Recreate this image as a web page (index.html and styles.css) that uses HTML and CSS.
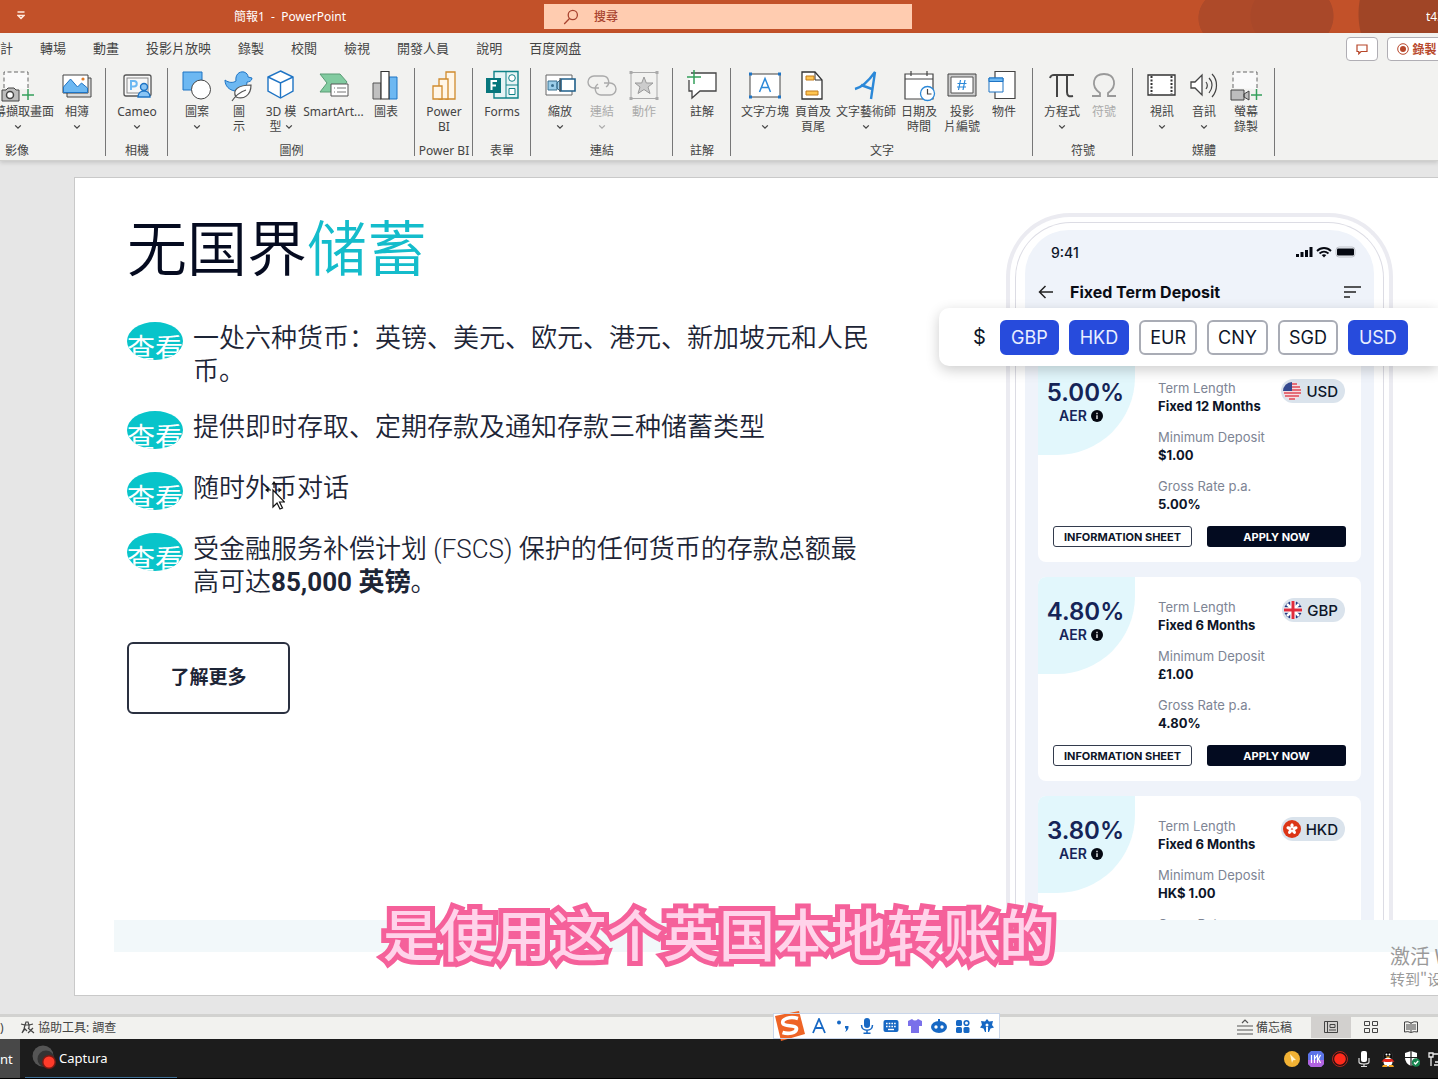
FILE: index.html
```html
<!DOCTYPE html>
<html lang="zh-Hant">
<head>
<meta charset="utf-8">
<meta name="viewport" content="width=device-width, initial-scale=1">
<title>簡報1 - PowerPoint</title>
<link rel="stylesheet" href="styles.css">
</head>
<body>
<svg class="sprite" aria-hidden="true">
  <symbol id="chev" viewBox="0 0 8 6"><path d="M1.2 1.4 4 4.2 6.800 1.400" fill="none" stroke="currentColor" stroke-width="1.300"/></symbol>
  <symbol id="info" viewBox="0 0 12 12"><circle cx="6" cy="6" r="6" fill="#050811"/><path d="M6 5.200V9M6 2.800v1.400" stroke="#fff" stroke-width="1.300"/></symbol>
</svg>
<div class="app">
  <header class="titlebar">
    <div class="title-left">
      <svg class="qat" viewBox="0 0 8 9" width="8" height="9"><path d="M.5 1h7M1 4.500l3 3 3-3z" fill="none" stroke="#ffe9dd" stroke-width="1.400"/></svg>
      <span class="doc-title">簡報1&nbsp; -&nbsp; PowerPoint</span>
    </div>
    <label class="search">
      <svg viewBox="0 0 16 16" width="16" height="16"><circle cx="9.800" cy="6" r="4.600" fill="none" stroke="#a8432f" stroke-width="1.300"/><path d="M6.500 9.500 1.200 15" stroke="#a8432f" stroke-width="1.300"/></svg>
      <input type="text" placeholder="搜尋" aria-label="搜尋">
    </label>
    <div class="title-right"><span class="user">t43</span></div>
  </header>

  <div class="ribbon">
    <div class="tabrow">
      <nav class="tabs">
        <a href="#">計</a><a href="#">轉場</a><a href="#">動畫</a><a href="#">投影片放映</a><a href="#">錄製</a><a href="#">校閱</a><a href="#">檢視</a><a href="#">開發人員</a><a href="#">說明</a><a href="#">百度网盘</a>
      </nav>
      <div class="tab-actions">
        <button class="tab-btn" aria-label="註解"><svg viewBox="0 0 12 11" width="12" height="11"><path d="M1 1h10v6.500H5L2.800 9.800V7.500H1z" fill="none" stroke="#b7472a" stroke-width="1.200"/></svg></button>
        <button class="tab-btn record"><svg viewBox="0 0 12 12" width="12" height="12"><circle cx="6" cy="6" r="5.300" fill="none" stroke="#b7472a"/><circle cx="6" cy="6" r="3" fill="#b7472a"/></svg>錄製</button>
      </div>
    </div>
    <div class="groups">
      <section class="group first">
        <div class="items">
          <button class="item w76"><svg viewBox="0 0 32 30"><path d="M2 18V2h24v17" fill="#fafafa" stroke="#666" stroke-dasharray="4 2.500"/><path d="M0 20h4l2-2h6l2 2h3v11H0z" fill="#bdbdbd" stroke="#444"/><circle cx="8" cy="25" r="3.500" fill="#fff" stroke="#444" stroke-width="1.500"/><path d="M20 25h12M26 19v11" stroke="#35a05b" stroke-width="1.500"/></svg><span>螢幕擷取畫面</span><svg class="chev"><use href="#chev"/></svg></button>
          <button class="item w42"><svg viewBox="0 0 32 30"><path d="M6 8h24v19H6z" fill="#ddd" stroke="#444"/><path d="M2 5h25v18H2z" fill="#fff" stroke="#444"/><path d="M2.500 17l7-8 7 8 4-4 6 5v4.500h-24z" fill="#6db8f2" stroke="#1f74c4"/><circle cx="22" cy="9" r="1.600" fill="#e07b28"/></svg><span>相簿</span><svg class="chev"><use href="#chev"/></svg></button>
        </div>
        <h2>影像</h2>
      </section>
      <section class="group">
        <div class="items">
          <button class="item w46"><svg viewBox="0 0 32 30"><rect x="3" y="5" width="27" height="21" rx="2" fill="#f8f8f8" stroke="#555" stroke-width="1.300"/><rect x="6" y="8" width="21" height="15" fill="none" stroke="#888"/><path d="M10 20v-9h3a2.500 2.500 0 0 1 0 5.500h-3" fill="none" stroke="#6db8f2" stroke-width="2"/><circle cx="23" cy="17" r="3.500" fill="#8ac5f5" stroke="#1f74c4" stroke-width="1.400"/><path d="M17 27c0-8 12-8 12 0z" fill="#8ac5f5" stroke="#1f74c4" stroke-width="1.400"/></svg><span>Cameo</span><svg class="chev"><use href="#chev"/></svg></button>
        </div>
        <h2>相機</h2>
      </section>
      <section class="group">
        <div class="items">
          <button class="item w42"><svg viewBox="0 0 32 30"><path d="M2 2h19v18H2z" fill="#6db8f2" stroke="#1f74c4"/><circle cx="20" cy="19.500" r="9.500" fill="#fff" stroke="#444"/></svg><span>圖案</span><svg class="chev"><use href="#chev"/></svg></button>
          <button class="item w42"><svg viewBox="0 0 32 30"><path d="M2 10c4 3 8 3 11 1-1-6 3-10 8-9 3 1 4 3 4 5l4 1c0 3-3 4-5 4 0 6-5 10-12 9C6 20 2 16 2 10z" fill="#6db8f2" stroke="#1f74c4"/><path d="M13 27c-4-7 2-12 15-12 0 10-7 15-15 12z" fill="#fff" stroke="#555" stroke-width="1.200"/><path d="M9 31c4-6 8-9 14-11" fill="none" stroke="#555" stroke-width="1.200"/></svg><span>圖<br>示</span></button>
          <button class="item w42"><svg viewBox="0 0 32 30"><path d="M15.500 1 28 7v14L15.500 28 3 21V7z" fill="#fff" stroke="#1f74c4" stroke-width="1.400"/><path d="M3 7l12.500 6L28 7M15.500 13v15" fill="none" stroke="#1f74c4" stroke-width="1.400"/></svg><span>3D 模<br>型 <svg class="chev inline"><use href="#chev"/></svg></span></button>
          <button class="item w63"><svg viewBox="0 0 32 30"><path d="M2 4h20l7 8-7 10H2l7-9z" fill="#82cba0" stroke="#5a9c75"/><path d="M13 14h17v12H13z" fill="#fff" stroke="#555"/><path d="M16 18h1m2 0h9M16 22h1m2 0h9" stroke="#777" stroke-width="1.200"/></svg><span>SmartArt...</span></button>
          <button class="item w42"><svg viewBox="0 0 32 30"><path d="M3 13h8v16H3z" fill="#c0c0c0" stroke="#555"/><path d="M19 7h8v22h-8z" fill="#6db8f2" stroke="#1f74c4"/><path d="M11 1.500h8V29h-8z" fill="#fff" stroke="#333" stroke-width="1.200"/></svg><span>圖表</span></button>
        </div>
        <h2>圖例</h2>
      </section>
      <section class="group">
        <div class="items">
          <button class="item w42"><svg viewBox="0 0 32 30"><g fill="#fff6e8" stroke="#d08a2c" stroke-width="1.300"><path d="M18 2h9v27h-9z"/><path d="M11 9h9v20h-9z"/><path d="M5 16h9v13H5z"/></g></svg><span>Power<br>BI</span></button>
        </div>
        <h2>Power BI</h2>
      </section>
      <section class="group">
        <div class="items">
          <button class="item w42"><svg viewBox="0 0 32 30"><path d="M8 1.500h24V28H8z" fill="#e6f4f5" stroke="#0f8288" stroke-width="1.400"/><path d="M20 1.500V28M20 15h12" stroke="#0f8288"/><circle cx="26" cy="8" r="3.300" fill="#fff" stroke="#0f8288"/><path d="M23 18.500h6v6h-6z" fill="#fff" stroke="#0f8288"/><path d="M0 8h15v15H0z" fill="#07767c"/><path d="M5.500 20v-9H11M5.500 15.500H10" stroke="#fff" stroke-width="2" fill="none"/></svg><span>Forms</span></button>
        </div>
        <h2>表單</h2>
      </section>
      <section class="group">
        <div class="items">
          <button class="item w42"><svg viewBox="0 0 32 30"><path d="M2 5h26v20H2z" fill="#fff" stroke="#666"/><path d="M4 11h9v9H4zM13 13l3-3v11l-3-3z" fill="#9ccfea" stroke="#39708f"/><circle cx="8.500" cy="15.500" r="1.500" fill="#39708f"/><path d="M17 9h14v12H17z" fill="#fff" stroke="#1f5f8a" stroke-width="1.600"/><path d="M16 8v14" stroke="#444"/></svg><span>縮放</span><svg class="chev"><use href="#chev"/></svg></button>
          <button class="item w42" disabled><svg viewBox="0 0 32 30"><g fill="none" stroke="#aaa" stroke-width="1.400"><path d="M13 18H8A6 6 0 0 1 8 6h9a6 6 0 0 1 3 11"/><path d="M18 13h6a6 6 0 0 1 0 12h-9a6 6 0 0 1-3-11"/></g></svg><span>連結</span><svg class="chev"><use href="#chev"/></svg></button>
          <button class="item w42" disabled><svg viewBox="0 0 32 30"><path d="M3 2.500h26v26H3z" fill="none" stroke="#aaa"/><path d="M1.500 1h3v3h-3zM27.500 1h3v3h-3zM1.500 27h3v3h-3zM27.500 27h3v3h-3z" fill="#aaa"/><path d="M16 7l2.300 6H25l-5 4 2 6.500-6-4-6 4 2-6.500-5-4h6.700z" fill="#ccc" stroke="#999"/></svg><span>動作</span></button>
        </div>
        <h2>連結</h2>
      </section>
      <section class="group">
        <div class="items">
          <button class="item w42"><svg viewBox="0 0 32 30"><path d="M5 3h25v18H14l-8 7v-7H3V10" fill="#fff" stroke="#444" stroke-width="1.300"/><path d="M8 0v14M1 7h14" stroke="#35a05b" stroke-width="1.500"/></svg><span>註解</span></button>
        </div>
        <h2>註解</h2>
      </section>
      <section class="group">
        <div class="items">
          <button class="item w52"><svg viewBox="0 0 32 30"><path d="M1 4h30v23H1z" fill="#fff" stroke="#444"/><path d="M0 2.500h3v3H0zM29 2.500h3v3h-3zM0 25.500h3v3H0zM29 25.500h3v3h-3z" fill="#1f74c4"/><path d="M10.500 22 16 8.500 21.500 22M12.500 17.500h7" fill="none" stroke="#2b88d8" stroke-width="1.500"/></svg><span>文字方塊</span><svg class="chev"><use href="#chev"/></svg></button>
          <button class="item w44"><svg viewBox="0 0 32 30"><path d="M5 2h13l7 8v19H5z" fill="#fff" stroke="#333" stroke-width="1.300"/><path d="M18 2v8h7" fill="none" stroke="#333"/><path d="M9 6h8v4H9zM9 21h12v4H9z" fill="#ffc550" stroke="#c27a1a"/></svg><span>頁首及<br>頁尾</span></button>
          <button class="item w62"><svg viewBox="0 0 32 30"><path d="M5 19C13 17 20 9 25 2L21 29M11 15l11 4" fill="none" stroke="#2b88d8" stroke-width="2.400"/></svg><span>文字藝術師</span><svg class="chev"><use href="#chev"/></svg></button>
          <button class="item w44"><svg viewBox="0 0 32 30"><path d="M2 4h28v25H2zM2 9h28M8 1v5M24 1v5" fill="#fff" stroke="#444" stroke-width="1.200"/><circle cx="24.500" cy="23.500" r="7" fill="#fff" stroke="#2b88d8" stroke-width="1.300"/><path d="M24.500 19v5h4" fill="none" stroke="#444" stroke-width="1.200"/></svg><span>日期及<br>時間</span></button>
          <button class="item w42"><svg viewBox="0 0 32 30"><path d="M2 4h28v22H2z" fill="#ccc" stroke="#444"/><path d="M5 7h22v16H5z" fill="#fff" stroke="#555"/><path d="M14.500 10l-2 10M19 10l-2 10M11.500 13.500h9M11 17h9" stroke="#2b88d8" stroke-width="1.200"/></svg><span>投影<br>片編號</span></button>
          <button class="item w42"><svg viewBox="0 0 32 30"><path d="M7 1.500h20v27H7z" fill="#fff" stroke="#444" stroke-width="1.200"/><path d="M1 8h14v14H1z" fill="#fff" stroke="#1f74c4"/><path d="M1 8h14v3.500H1z" fill="#6db8f2" stroke="#1f74c4"/></svg><span>物件</span></button>
        </div>
        <h2>文字</h2>
      </section>
      <section class="group">
        <div class="items">
          <button class="item w42"><svg viewBox="0 0 32 30"><path d="M4 8c1-3 2-3 4-3h20M11 5v22M21 5v17c0 4 2 5 6 4" fill="none" stroke="#444" stroke-width="2"/></svg><span>方程式</span><svg class="chev"><use href="#chev"/></svg></button>
          <button class="item w42" disabled><svg viewBox="0 0 32 30"><path d="M4 26h8v-3c-10-7-7-19 4-19s14 12 4 19v3h8" fill="none" stroke="#999" stroke-width="1.800"/></svg><span>符號</span></button>
        </div>
        <h2>符號</h2>
      </section>
      <section class="group">
        <div class="items">
          <button class="item w42"><svg viewBox="0 0 32 30"><path d="M2 5h27v20H2z" fill="#fff" stroke="#333" stroke-width="1.300"/><path d="M5.500 6v18M25.500 6v18" stroke="#333" stroke-width="2" stroke-dasharray="2 1.500"/></svg><span>視訊</span><svg class="chev"><use href="#chev"/></svg></button>
          <button class="item w42"><svg viewBox="0 0 32 30"><path d="M3 12h4l7-7v20l-7-7H3z" fill="#fff" stroke="#444" stroke-width="1.300"/><path d="M18 12c1.500 2 1.500 5 0 7M21 8c4 4 4 10 0 15M24 4c6 6 6 16 0 23" fill="none" stroke="#444" stroke-width="1.200"/></svg><span>音訊</span><svg class="chev"><use href="#chev"/></svg></button>
          <button class="item w42"><svg viewBox="0 0 32 30"><path d="M3 18V2h24v17" fill="#fafafa" stroke="#666" stroke-dasharray="4 2.500"/><path d="M1 20h13v10H1zM14 24l5-3v9l-5-3z" fill="#bdbdbd" stroke="#444"/><path d="M21 25h11M26.500 19v11" stroke="#35a05b" stroke-width="1.500"/></svg><span>螢幕<br>錄製</span></button>
        </div>
        <h2>媒體</h2>
      </section>
    </div>
  </div>

  <main class="workspace" lang="zh-Hans">
    <article class="slide">
      <div class="slide-main">
        <div class="copy">
          <h1>无国界<em>储蓄</em></h1>
          <ul class="points">
            <li><span class="badge">查看</span><p>一处六种货币：英镑、美元、欧元、港元、新加坡元和人民币。</p></li>
            <li><span class="badge">查看</span><p>提供即时存取、定期存款及通知存款三种储蓄类型</p></li>
            <li><span class="badge">查看</span><p>随时外币对话</p></li>
            <li><span class="badge">查看</span><p>受金融服务补偿计划 (FSCS) 保护的任何货币的存款总额最高可达<b>85,000 英镑</b>。</p></li>
          </ul>
          <button class="more">了解更多</button>
          <svg class="cursor" viewBox="0 0 20 29" width="20" height="29"><path d="M8 9v17l4-4 3 6 2.500-1-3-6h5z" fill="#fff" stroke="#111" stroke-width="1.200"/><path d="M9 0l2.500 3.500h-5zM0 9l3.500-2.500v5zM17 9l-3.500-2.500v5z" fill="#111"/><path d="M9 2v5M3 9h3M11 9h4" stroke="#111" stroke-width="1.200"/></svg>
        </div>
        <div class="device">
          <div class="phone"><div class="bezel"><div class="screen">
            <div class="phone-status"><span>9:41</span>
              <svg viewBox="0 0 62 12" width="62" height="12"><path d="M1 8h3v3H1zM5.500 6h3v5h-3zM10 4h3v7h-3zM14.500 1h3v10h-3z" fill="#050811"/><path d="M22 5c4-4 10-4 14 0M24.500 7.500c3-2.500 6-2.500 9 0" fill="none" stroke="#050811" stroke-width="1.800"/><path d="M29 11.500l-2.300-2.500q2.300-1.500 4.600 0z" fill="#050811"/><rect x="41" y="1" width="19" height="10" rx="3" fill="none" stroke="#c0c3ca"/><rect x="42" y="2.500" width="17" height="7" rx="1" fill="#050811"/></svg>
            </div>
            <div class="phone-nav">
              <svg viewBox="0 0 15 14" width="15" height="14"><path d="M7.500 1 1.500 7l6 6M1.500 7H15" fill="none" stroke="#222" stroke-width="1.500"/></svg>
              <strong>Fixed Term Deposit</strong>
              <svg viewBox="0 0 17 14" width="17" height="14"><path d="M0 2h17M0 7h12M0 12h6" stroke="#222" stroke-width="1.600"/></svg>
            </div>
            <div class="cards">
              <section class="card">
                <div class="rate"><b>5.00%</b><span>AER <svg width="12" height="12"><use href="#info"/></svg></span></div>
                <dl><dt>Term Length</dt><dd>Fixed 12 Months</dd><dt>Minimum Deposit</dt><dd>$1.00</dd><dt>Gross Rate p.a.</dt><dd>5.00%</dd></dl>
                <span class="pill"><svg viewBox="0 0 18 18" width="18" height="18"><circle cx="9" cy="9" r="9" fill="#f6dfe2"/><path d="M9 2h5M9 5h8M9 8h9M1 11h17M2 14h14M6 17h6" stroke="#e04a55" stroke-width="1.500"/><path d="M9 0v9H0A9 9 0 0 1 9 0z" fill="#34498f"/></svg>USD</span>
                <div class="actions"><button class="sheet">INFORMATION SHEET</button><button class="apply">APPLY NOW</button></div>
              </section>
              <section class="card">
                <div class="rate"><b>4.80%</b><span>AER <svg width="12" height="12"><use href="#info"/></svg></span></div>
                <dl><dt>Term Length</dt><dd>Fixed 6 Months</dd><dt>Minimum Deposit</dt><dd>£1.00</dd><dt>Gross Rate p.a.</dt><dd>4.80%</dd></dl>
                <span class="pill"><svg viewBox="0 0 18 18" width="18" height="18"><circle cx="9" cy="9" r="9" fill="#20367e"/><path d="M3 3l12 12M15 3 3 15" stroke="#fff" stroke-width="2.500"/><path d="M9 0v18M0 9h18" stroke="#fff" stroke-width="5.500"/><path d="M9 0v18M0 9h18" stroke="#e02c3c" stroke-width="3"/></svg>GBP</span>
                <div class="actions"><button class="sheet">INFORMATION SHEET</button><button class="apply">APPLY NOW</button></div>
              </section>
              <section class="card">
                <div class="rate"><b>3.80%</b><span>AER <svg width="12" height="12"><use href="#info"/></svg></span></div>
                <dl><dt>Term Length</dt><dd>Fixed 6 Months</dd><dt>Minimum Deposit</dt><dd>HK$ 1.00</dd><dt>Gross Rate p.a.</dt><dd>3.80%</dd></dl>
                <span class="pill"><svg viewBox="0 0 18 18" width="18" height="18"><circle cx="9" cy="9" r="9" fill="#dc3516"/><g fill="#fff"><ellipse cx="9" cy="5.800" rx="1.700" ry="2.600"/><ellipse cx="9" cy="5.800" rx="1.700" ry="2.600" transform="rotate(72 9 9)"/><ellipse cx="9" cy="5.800" rx="1.700" ry="2.600" transform="rotate(144 9 9)"/><ellipse cx="9" cy="5.800" rx="1.700" ry="2.600" transform="rotate(216 9 9)"/><ellipse cx="9" cy="5.800" rx="1.700" ry="2.600" transform="rotate(288 9 9)"/></g></svg>HKD</span>
              </section>
            </div>
          </div></div></div>
          <div class="currencies">
            <span class="dollar">$</span>
            <button class="on">GBP</button><button class="on">HKD</button><button>EUR</button><button>CNY</button><button>SGD</button><button class="on">USD</button>
          </div>
        </div>
      </div>
      <div class="band"></div>
    </article>
    <p class="caption">是使用这个英国本地转账的</p>
    <div class="activate"><p>激活 Windows</p><small>转到"设置"以激活</small></div>
  </main>

  <footer class="statusbar">
    <span class="lang">)</span>
    <svg viewBox="0 0 15 14" width="15" height="14"><path d="M1 4l4 1 1-3 2 0 1 3 4-1M5 5l-1 4-2 4M5 5h4v3M2 13l3-4 2 2M8 8l6 5M13 8l-5 5" fill="none" stroke="#444" stroke-width="1.200"/></svg>
    <span class="a11y">協助工具: 調查</span>
    <div class="views">
      <button class="notes"><svg viewBox="0 0 16 16" width="16" height="16"><path d="M0 7h16M0 11h16M0 15h16M5 4l3-3 3 3" fill="none" stroke="#555" stroke-width="1.200"/></svg>備忘稿</button>
      <button class="view active" aria-label="標準"><svg viewBox="0 0 14 12" width="14" height="12"><path d="M.5.500h13v11H.5zM3.500.500v11M6 3.500h5v3H6zM5 9h7" fill="none" stroke="#444"/></svg></button>
      <button class="view" aria-label="投影片瀏覽"><svg viewBox="0 0 14 12" width="14" height="12"><path d="M.5.500h5v4h-5zM8.500.500h5v4h-5zM.5 7.500h5v4h-5zM8.500 7.500h5v4h-5z" fill="none" stroke="#444"/></svg></button>
      <button class="view" aria-label="閱讀檢視"><svg viewBox="0 0 14 12" width="14" height="12"><path d="M7 2Q4 0 .5 1v10Q4 10 7 11.500 10 10 13.500 11V1Q10 0 7 2v9M3 3v6M5 3v6M9 3v6M11 3v6" fill="none" stroke="#444"/></svg></button>
    </div>
    <div class="ime">
      <svg class="sogou" viewBox="0 0 32 30" width="32" height="30"><path d="M1 5 25 0l6 23-24 7z" fill="#ee6426"/><path d="M24 7.500C16 5 7 8 9 12.500c1.500 3.500 14 1 13.500 5.500-.500 4-8 5.500-14 3.500" fill="none" stroke="#fff" stroke-width="3.600"/></svg>
      <svg viewBox="0 0 16 16" width="16" height="16"><path d="M2 15 8 1l6 14M4.500 10h7" fill="none" stroke="#1768c4" stroke-width="1.800"/></svg>
      <svg viewBox="0 0 16 16" width="16" height="16"><circle cx="4" cy="4.500" r="2" fill="#1768c4"/><path d="M10 8h3.500q.500 4-3.500 6 1.500-2 1-3-1.500-1-1-3" fill="#1768c4"/></svg>
      <svg viewBox="0 0 16 16" width="16" height="16"><rect x="5" y="0" width="6" height="10" rx="3" fill="#1768c4"/><path d="M2.500 7c0 7 11 7 11 0M8 12v3M4.500 15.200h7" fill="none" stroke="#1768c4" stroke-width="1.500"/></svg>
      <svg viewBox="0 0 16 16" width="16" height="16"><rect x=".5" y="2" width="15" height="12" rx="2" fill="#1768c4"/><path d="M3 5.500h10M3 8.500h10" stroke="#fff" stroke-width="1.500" stroke-dasharray="1.600 1.100"/><path d="M5 11.500h6" stroke="#fff" stroke-width="1.400"/></svg>
      <svg viewBox="0 0 16 16" width="16" height="16"><path d="M1 3l4-2q3 3 6 0l4 2v5h-3v7H4V8H1z" fill="#7a70ea"/></svg>
      <svg viewBox="0 0 16 16" width="16" height="16"><path d="M8 1v3" stroke="#1768c4" stroke-width="2"/><ellipse cx="8" cy="9" rx="8" ry="6" fill="#1768c4"/><circle cx="5" cy="9" r="1.700" fill="#fff"/><circle cx="11" cy="9" r="1.700" fill="#fff"/></svg>
      <svg viewBox="0 0 16 16" width="16" height="16"><g fill="#1768c4"><rect x="1" y="2" width="6" height="6" rx="1.500"/><rect x="1" y="9" width="6" height="6" rx="1.500"/><rect x="8.500" y="9" width="6" height="6" rx="1.500"/></g><circle cx="11.500" cy="5" r="2.300" fill="none" stroke="#1768c4" stroke-width="1.600"/></svg>
      <svg viewBox="0 0 16 16" width="16" height="16"><path d="M8 1l2 2.500 4-.5-1 4 2 2.500-3.500 1L10 14H9V9H7v5H6l-1.500-3.500-3.500-1L3 7 2 3l4 .5z" fill="#1768c4"/><circle cx="8" cy="7" r="1.500" fill="#fff"/></svg>
    </div>
  </footer>

  <div class="taskbar">
    <button class="task current">nt</button>
    <button class="task captura"><svg viewBox="0 0 26 26" width="26" height="26"><circle cx="11" cy="11" r="10.500" fill="#555"/><circle cx="14" cy="14" r="8.500" fill="#333"/><circle cx="17" cy="17" r="7" fill="#7a1a14"/><circle cx="17" cy="17" r="5.500" fill="#ff3b2a"/></svg>Captura</button>
    <div class="tray">
      <svg viewBox="0 0 16 16"><circle cx="8" cy="8" r="8" fill="#f2b234"/><path d="M6 3l6 6-3 .3L8 12z" fill="#fff4cf"/></svg>
      <svg viewBox="0 0 16 16"><path d="M3 0h10l3 3v10l-3 3H3l-3-3V3z" fill="#5b74e8"/><path d="M0 9h16v4l-3 3H3l-3-3z" fill="#b163e0"/><path d="M3.500 12V4m3 8V4m0 4 3-4v8m3-8-2 4 2 4" stroke="#fff" stroke-width="1.200" fill="none"/></svg>
      <svg viewBox="0 0 16 16"><circle cx="8" cy="8" r="7.500" fill="#2a1111" stroke="#b3261e"/><circle cx="8" cy="8" r="5.800" fill="#ff2b1c"/></svg>
      <svg viewBox="0 0 16 16"><rect x="5" y="0" width="6" height="11" rx="2" fill="#fff"/><path d="M3 7v4q0 2 5 2t5-2V7M8 13v3M5 15.500h6" stroke="#ddd" fill="none" stroke-width="1.200"/></svg>
      <svg viewBox="0 0 16 16"><ellipse cx="8" cy="5" rx="4.500" ry="5" fill="#0a0a0a" stroke="#444" stroke-width=".5"/><ellipse cx="8" cy="11" rx="4.500" ry="4.500" fill="#fff"/><path d="M1.500 11q2-3 2.500-3l8 0q.5 0 2.500 3l-2-.5q-4.500 1-9 0z" fill="#e5261c"/><path d="M5.500 5.500h5L8 7zM3 14h4v2H2zM9 14h4l1 2H9z" fill="#f5a623"/><circle cx="6.500" cy="3.500" r="1" fill="#fff"/><circle cx="9.500" cy="3.500" r="1" fill="#fff"/></svg>
      <svg viewBox="0 0 16 16"><path d="M7 0 1 2v5q0 5 6 8 6-3 6-8V2z" fill="#fff"/><path d="M7 0v15M1 6.500h12" stroke="#1c1c1c" stroke-width="1.200"/><circle cx="12" cy="11.500" r="4.300" fill="#18854f"/><path d="M10 11.500l1.500 1.500 2.700-3" stroke="#fff" stroke-width="1.300" fill="none"/></svg>
      <svg viewBox="0 0 16 16"><path d="M1 2h4v4H1zM3 6v9M5 3h10v8H7M6 14h6" stroke="#eee" stroke-width="1.300" fill="none"/></svg>
    </div>
  </div>
</div>
</body>
</html>
```
FILE: styles.css
```css
* { box-sizing: border-box; }
html, body { margin: 0; }
body {
  font-family: "Noto Sans", "Noto Sans CJK TC", sans-serif;
  font-size: 12px;
  color: #444;
  overflow: hidden;
}
button, input { font: inherit; color: inherit; }
button { padding: 0; border: 0; background: none; }
p, h1, h2, ul, dl, dd { margin: 0; padding: 0; }
.sprite { position: absolute; width: 0; height: 0; }
.app { display: flex; flex-direction: column; min-height: 100vh; }

/* title bar */
.titlebar {
  display: grid;
  grid-template-columns: minmax(0, 544fr) 368px minmax(0, 526fr);
  height: 33px;
  color: #fff;
  background: #c25129;
}
.title-left { display: flex; align-items: center; padding: 0 0 2px 17px; }
.doc-title { margin-left: 209px; white-space: nowrap; }
.search {
  display: flex;
  align-items: center;
  gap: 15px;
  margin: 4px 0;
  padding-left: 19px;
  background: #ffccb0;
}
.search input { flex: 1; min-width: 0; border: 0; background: none; outline: 0; padding: 0; }
.search input::placeholder { color: #a8432f; opacity: 1; font-weight: 500; }
.title-right {
  display: flex;
  align-items: center;
  justify-content: flex-end;
  overflow: hidden;
  background:
    radial-gradient(circle at 526px 14px, #a04526 79px, transparent 80px),
    radial-gradient(ellipse 42px 36px at 380px 16px, #a94829 98%, transparent),
    radial-gradient(ellipse 34px 30px at 320px 18px, #ae4a29 98%, transparent);
}
.user { width: 12px; overflow: hidden; }

/* ribbon */
.ribbon { background: #f2f2f0; border-bottom: 1px solid #d0d0ce; box-shadow: 0 2px 4px #0002; z-index: 1; }
.tabrow { display: flex; justify-content: space-between; height: 29px; overflow: hidden; }
.tabs { display: flex; align-items: center; gap: 27px; font-size: 13px; }
.tabs a { color: #444; text-decoration: none; white-space: nowrap; }
.tab-actions { display: flex; gap: 9px; padding-top: 4px; margin-right: -9px; }
.tab-btn {
  display: flex;
  align-items: center;
  justify-content: center;
  width: 32px;
  height: 24px;
  border: 1px solid #b0aeb4;
  border-radius: 4px;
  background: #fff;
}
.record { width: 60px; gap: 3px; color: #b7472a; font-weight: bold; }
.groups { display: flex; height: 98px; padding: 6px 0 4px; }
.group {
  display: flex;
  flex-direction: column;
  justify-content: space-between;
  flex: none;
  padding: 2px 7px 0 8px;
  border-right: 1px solid #777;
}
.first { margin-left: -72px; padding-left: 52px; width: 178px; }
.items { display: flex; }
.group h2 { font-size: 12px; font-weight: normal; line-height: 10px; text-align: center; white-space: nowrap; margin: 0 -8px; }
.first h2 { margin-left: -52px; }
.item { display: flex; flex-direction: column; align-items: center; line-height: 15px; white-space: nowrap; }
.item > svg:first-child { width: 32px; height: 30px; margin-bottom: 4px; flex: none; overflow: visible; }
.item:disabled { color: #aaa; }
.item .chev { width: 8px; height: 6px; margin-top: 5px; }
.item .inline { margin: 0 0 1px; }
.w42 { width: 42px; }
.w44 { width: 44px; }
.w46 { width: 46px; }
.w52 { width: 52px; }
.w62 { width: 62px; }
.w63 { width: 63px; }
.w76 { width: 76px; }

/* slide */
.workspace { position: relative; flex: 1; padding: 16px 0 18px 74px; background: #e6e6e6; overflow: hidden; }
.slide { background: #fff; border: 1px solid #c9c9c9; border-right: 0; padding-bottom: 43px; }
.slide-main { display: grid; grid-template-columns: 810px minmax(0, 1fr); height: 742px; overflow: hidden; }
.copy { position: relative; padding: 35px 0 0 52px; color: #1d2536; font-family: Roboto, "Noto Sans CJK SC", sans-serif; }
.copy h1 { font-size: 60px; line-height: 76px; font-weight: 350; color: #050b20; margin-bottom: 33px; }
.copy em { font-style: normal; color: #14bccb; }
.points { display: flex; flex-direction: column; gap: 23px; list-style: none; }
.points li { display: flex; align-items: flex-start; gap: 10px; }
.points p { width: 684px; font-size: 26px; line-height: 33px; font-weight: 350; }
.points b { font-weight: 700; }
.badge {
  flex: none;
  width: 56px;
  height: 38px;
  border-radius: 50%;
  overflow: hidden;
  background: #08c4ca;
  color: #fff;
  font-size: 28px;
  line-height: 56px;
}
.more {
  display: block;
  width: 163px;
  height: 72px;
  margin-top: 43px;
  padding-bottom: 5px;
  border: 2px solid #2a3040;
  border-radius: 6px;
  font-size: 19px;
  font-weight: bold;
}
.cursor { position: absolute; left: 190px; top: 303px; }
.band { height: 32px; margin-left: 39px; background: #f2f8fa; }

/* phone */
.device { position: relative; padding: 35px 0 0 121px; font-family: Inter, sans-serif; color: #0d1528; }
.phone { width: 387px; padding: 5px; border: 4px solid #ebebf1; border-bottom: 0; border-radius: 64px 64px 0 0; }
.bezel { padding: 7px 9px 0; border: 1px solid #dcdce4; border-bottom: 0; border-radius: 56px 56px 0 0; }
.screen { height: 740px; padding: 0 13px; border-radius: 44px 44px 0 0; background: #eff3fa; }
.phone-status { display: flex; align-items: center; justify-content: space-between; padding: 12px 4px 0 13px; height: 32px; font-size: 14px; font-weight: 500; }
.phone-nav { display: flex; align-items: center; height: 60px; font-size: 16px; }
.phone-nav strong { flex: 1; margin-left: 17px; font-weight: 700; color: #0a0c14; }
.cards { display: flex; flex-direction: column; gap: 15px; padding-top: 36px; }
.card {
  display: grid;
  grid-template-columns: 97px 1fr;
  column-gap: 23px;
  align-content: start;
  position: relative;
  height: 204px;
  border-radius: 8px;
  background: #fff;
}
.rate {
  display: flex;
  flex-direction: column;
  align-items: center;
  height: 97px;
  padding-top: 22px;
  border-radius: 8px 0 78px 0;
  background: #e2f7fc;
  color: #152457;
  white-space: nowrap;
}
.rate b { font-size: 24px; line-height: 26px; font-weight: 600; margin-right: 2px; }
.rate span { display: flex; align-items: center; gap: 4px; margin-right: 11px; font-size: 14px; line-height: 20px; font-weight: 600; }
.card dl { padding-top: 21px; font-size: 13px; line-height: 18px; }
.card dt { color: #7d8494; }
.card dd { margin-bottom: 13px; font-weight: 700; }
.pill {
  position: absolute;
  top: 21px;
  right: 16px;
  display: flex;
  align-items: center;
  gap: 5px;
  height: 24px;
  padding: 0 7px 0 2px;
  border-radius: 12px;
  background: #dae3ec;
  font-size: 15px;
  font-weight: 500;
}
.actions { grid-column: 1 / -1; display: grid; grid-template-columns: 1fr 1fr; gap: 15px; padding: 0 15px; }
.actions button { height: 21px; border-radius: 3px; font-size: 11px; font-weight: 700; white-space: nowrap; }
.actions .sheet { border: 1px solid #333b4d; }
.actions .apply { color: #fff; background: #030b20; }
.currencies {
  position: absolute;
  left: 54px;
  right: 0;
  top: 130px;
  display: flex;
  align-items: center;
  gap: 10px;
  height: 58px;
  padding-left: 34px;
  border-radius: 10px 0 0 10px;
  background: #fff;
  box-shadow: 0 4px 14px #0003;
  font-size: 18px;
}
.dollar { width: 17px; font-size: 20px; }
.currencies button { height: 35px; padding: 0 9px; border: 2px solid #a9acb5; border-radius: 6px; background: #fff; }
.currencies .on { border-color: #274bdc; background: #274bdc; color: #e9eeff; }

/* overlays */
.caption {
  position: absolute;
  left: 0;
  right: 0;
  bottom: 42px;
  text-align: center;
  font-family: "Noto Sans CJK SC", sans-serif;
  font-size: 56px;
  line-height: 80px;
  font-weight: 500;
  color: #ffd3ea;
  -webkit-text-stroke: 10px #f5609a;
  stroke-linejoin: round;
  paint-order: stroke fill;
  white-space: nowrap;
}
.activate { position: absolute; right: 0; bottom: 25px; width: 48px; overflow: hidden; white-space: nowrap; color: #9a9a9a; font-family: "Noto Sans CJK SC", sans-serif; }
.activate p { font-size: 20px; line-height: 26px; }
.activate small { display: block; font-size: 15px; line-height: 20px; }

/* status bar */
.statusbar { position: relative; display: flex; align-items: center; height: 25px; padding-bottom: 2px; border-top: 3px solid #d2d2d0; background: #f2f2ef; }
.lang { width: 20px; }
.a11y { margin-left: 3px; }
.views { display: flex; margin: 0 7px 0 auto; }
.notes { display: flex; align-items: center; gap: 3px; margin-right: 19px; }
.view { width: 40px; height: 22px; display: flex; align-items: center; justify-content: center; }
.active { background: #d2d0ce; }
.ime {
  position: absolute;
  left: 774px;
  bottom: 1px;
  display: flex;
  align-items: center;
  gap: 8px;
  height: 24px;
  padding-right: 4px;
  background: #fff;
  outline: 1px solid #c9d6ea;
}
.sogou { margin-right: -3px; }

/* task bar */
.taskbar { display: flex; height: 40px; color: #fff; background: #1c1c1c; border-bottom: 1px solid #000; font-size: 13px; }
.current { width: 20px; padding-right: 12px; background: #484848; }
.captura { display: flex; align-items: center; gap: 1px; width: 152px; margin-left: 5px; padding-left: 7px; border-bottom: 1px solid #3f6f96; }
.tray { display: flex; align-items: center; gap: 8px; margin-left: auto; margin-right: -6px; }
.tray svg { width: 16px; height: 16px; }
```
